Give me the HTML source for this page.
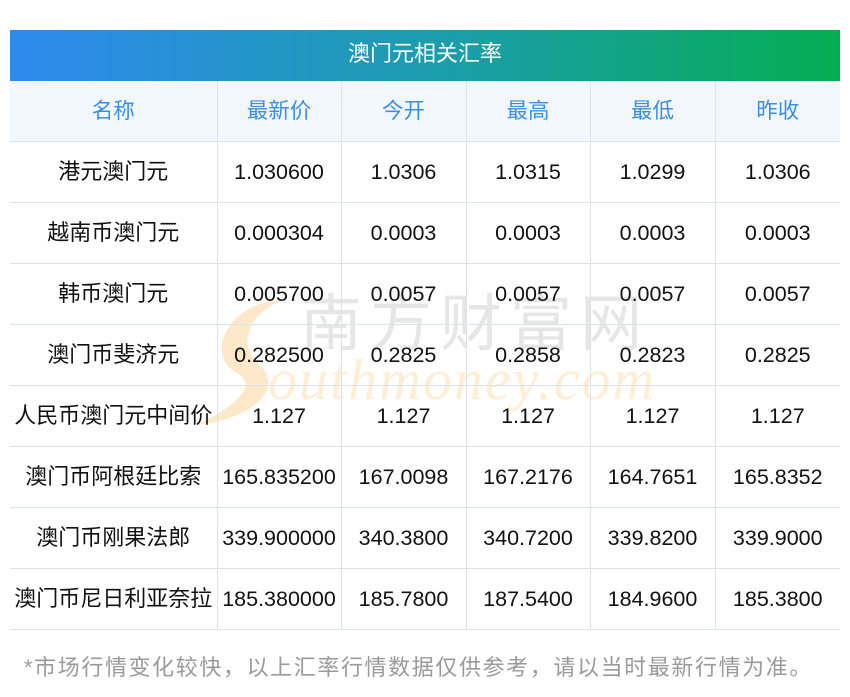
<!DOCTYPE html>
<html><head><meta charset="utf-8"><style>
body{margin:0;width:850px;height:697px;background:#fff;font-family:"Liberation Sans","Noto Sans CJK SC",sans-serif;position:relative;overflow:hidden}
.title{position:absolute;left:10px;top:30px;width:830px;height:51px;background:linear-gradient(90deg,#2f8af0,#1a9ea8 55%,#05ad52);color:#fff;font-size:22px;text-align:center;line-height:47px}
table{position:absolute;left:10px;top:81px;border-collapse:collapse;table-layout:fixed;width:830px}
td{height:60px;border:1px solid #dde1ec;text-align:center;font-size:21.5px;line-height:24px;color:#111;padding:0;white-space:nowrap;vertical-align:middle}
td:first-child{font-size:22px}
tr:first-child td{background:#f2f7fd;color:#3b8fe3;border-top:none;font-size:21.5px}
td:first-child{border-left:none}td:last-child{border-right:none}
.note{position:absolute;left:24px;top:650px;font-size:22px;letter-spacing:1.6px;color:#9a9a9a;white-space:nowrap}
.wm{position:absolute;pointer-events:none}
</style></head><body>
<div class="title">澳门元相关汇率</div>
<div class="wm" style="left:190px;top:295px;width:110px;height:135px">
<svg width="110" height="135"><path d="M95 5 C40 5 10 60 50 80 C70 95 30 120 5 130 C60 125 95 95 70 70 C45 50 60 15 95 5Z" fill="#fde9c9"/></svg></div>
<div class="wm" style="left:300px;top:292px;font-size:62px;color:#e6e6e6;letter-spacing:8px;line-height:66px">南方财富网</div>
<div class="wm" style="left:268px;top:350px;font-size:58px;color:#fdeed6;font-family:'Liberation Serif',serif;font-style:italic;letter-spacing:2px;line-height:60px">outhmoney.com</div>
<table>
<colgroup><col style="width:207px"><col style="width:124px"><col style="width:125px"><col style="width:124px"><col style="width:125px"><col style="width:125px"></colgroup>
<tr><td>名称</td><td>最新价</td><td>今开</td><td>最高</td><td>最低</td><td>昨收</td></tr>
<tr><td>港元澳门元</td><td>1.030600</td><td>1.0306</td><td>1.0315</td><td>1.0299</td><td>1.0306</td></tr>
<tr><td>越南币澳门元</td><td>0.000304</td><td>0.0003</td><td>0.0003</td><td>0.0003</td><td>0.0003</td></tr>
<tr><td>韩币澳门元</td><td>0.005700</td><td>0.0057</td><td>0.0057</td><td>0.0057</td><td>0.0057</td></tr>
<tr><td>澳门币斐济元</td><td>0.282500</td><td>0.2825</td><td>0.2858</td><td>0.2823</td><td>0.2825</td></tr>
<tr><td>人民币澳门元中间价</td><td>1.127</td><td>1.127</td><td>1.127</td><td>1.127</td><td>1.127</td></tr>
<tr><td>澳门币阿根廷比索</td><td>165.835200</td><td>167.0098</td><td>167.2176</td><td>164.7651</td><td>165.8352</td></tr>
<tr><td>澳门币刚果法郎</td><td>339.900000</td><td>340.3800</td><td>340.7200</td><td>339.8200</td><td>339.9000</td></tr>
<tr><td>澳门币尼日利亚奈拉</td><td>185.380000</td><td>185.7800</td><td>187.5400</td><td>184.9600</td><td>185.3800</td></tr>
</table>
<div class="note">*市场行情变化较快，以上汇率行情数据仅供参考，请以当时最新行情为准。</div>
</body></html>
